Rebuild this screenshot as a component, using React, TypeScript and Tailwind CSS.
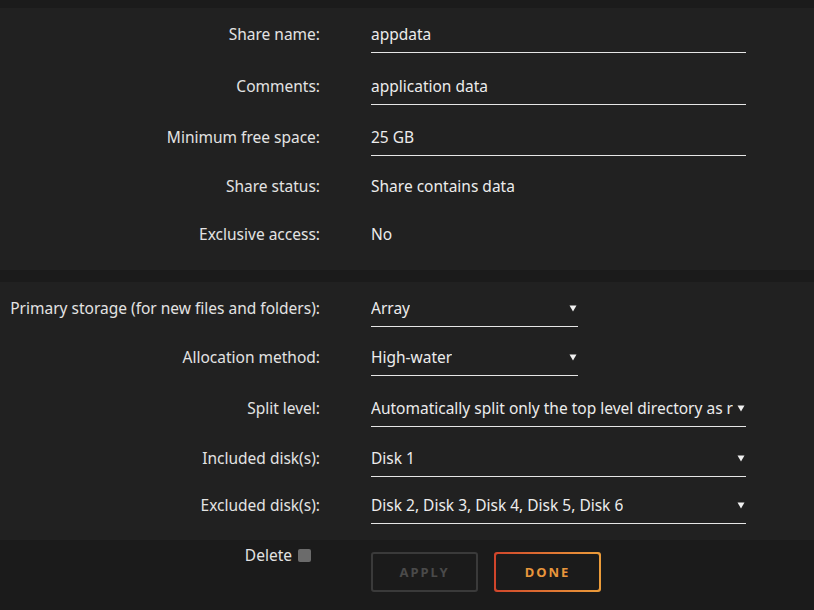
import React from 'react';

type Row = { label: string; value: string; kind: 'input' | 'text' | 'select'; width?: number; h: number };

const top: Row[] = [
  { label: 'Share name:', value: 'appdata', kind: 'input', h: 52 },
  { label: 'Comments:', value: 'application data', kind: 'input', h: 52 },
  { label: 'Minimum free space:', value: '25 GB', kind: 'input', h: 50 },
  { label: 'Share status:', value: 'Share contains data', kind: 'text', h: 48 },
  { label: 'Exclusive access:', value: 'No', kind: 'text', h: 48 },
];

const bottom: Row[] = [
  { label: 'Primary storage (for new files and folders):', value: 'Array', kind: 'select', width: 207, h: 50 },
  { label: 'Allocation method:', value: 'High-water', kind: 'select', width: 207, h: 48 },
  { label: 'Split level:', value: 'Automatically split only the top level directory as r', kind: 'select', width: 375, h: 54 },
  { label: 'Included disk(s):', value: 'Disk 1', kind: 'select', width: 375, h: 46 },
  { label: 'Excluded disk(s):', value: 'Disk 2, Disk 3, Disk 4, Disk 5, Disk 6', kind: 'select', width: 375, h: 48 },
];

function Caret() {
  return (
    <svg width="8" height="8" viewBox="0 0 8 8" className="shrink-0">
      <path d="M0.5 1.5 H7.5 L4 7.5 Z" fill="#f0f0f0" />
    </svg>
  );
}

function FieldRow({ row }: { row: Row }) {
  return (
    <div className="flex items-center" style={{ height: row.h }}>
      <div className="w-[320px] shrink-0 text-right text-[#e3e3e3] whitespace-nowrap">{row.label}</div>
      <div className="ml-[51px]">
        {row.kind === 'text' && <span className="text-[#ececec]">{row.value}</span>}
        {row.kind === 'input' && (
          <div className="w-[375px] h-[37px] flex items-center border-b border-[#e6e6e6] text-[#ececec]">{row.value}</div>
        )}
        {row.kind === 'select' && (
          <div
            className="h-[37px] flex items-center justify-between border-b border-[#e6e6e6] text-[#ececec] pr-[1px]"
            style={{ width: row.width }}
          >
            <span className="whitespace-nowrap overflow-hidden">{row.value}</span>
            <Caret />
          </div>
        )}
      </div>
    </div>
  );
}

export default function App() {
  return (
    <div
      className="w-[814px] h-[610px] bg-[#1b1b1b] text-[15.5px] leading-[22px] overflow-hidden"
      style={{ fontFamily: '"Noto Sans", sans-serif' }}
    >
      <div className="h-[8px]" />
      <div className="bg-[#212121] pb-[12px]">
        {top.map((r) => (
          <FieldRow key={r.label} row={r} />
        ))}
      </div>
      <div className="h-[12px]" />
      <div className="bg-[#212121] pt-[1px] pb-[11px]">
        {bottom.map((r) => (
          <FieldRow key={r.label} row={r} />
        ))}
      </div>
      <div className="flex items-start">
        <div className="w-[320px] shrink-0 mt-[4px] flex justify-end items-center gap-[6px] pr-[9px]">
          <span className="text-[#e3e3e3]">Delete</span>
          <span className="w-[13px] h-[13px] rounded-[2px] bg-[#6b6b6b]" />
        </div>
        <div className="ml-[51px] mt-[12px] flex gap-[16px]">
          <button className="w-[107px] h-[40px] rounded-[3px] border-2 border-[#3a3a3a] text-[#4a4a4a] text-[13px] font-bold tracking-[2px]">
            APPLY
          </button>
          <div className="w-[107px] h-[40px] rounded-[3px] p-[2px] bg-gradient-to-r from-[#d0442b] to-[#eb9c3a]">
            <button className="w-full h-full rounded-[2px] bg-[#1b1b1b] text-[#e8963c] text-[13px] font-bold tracking-[2px]">
              DONE
            </button>
          </div>
        </div>
      </div>
    </div>
  );
}
